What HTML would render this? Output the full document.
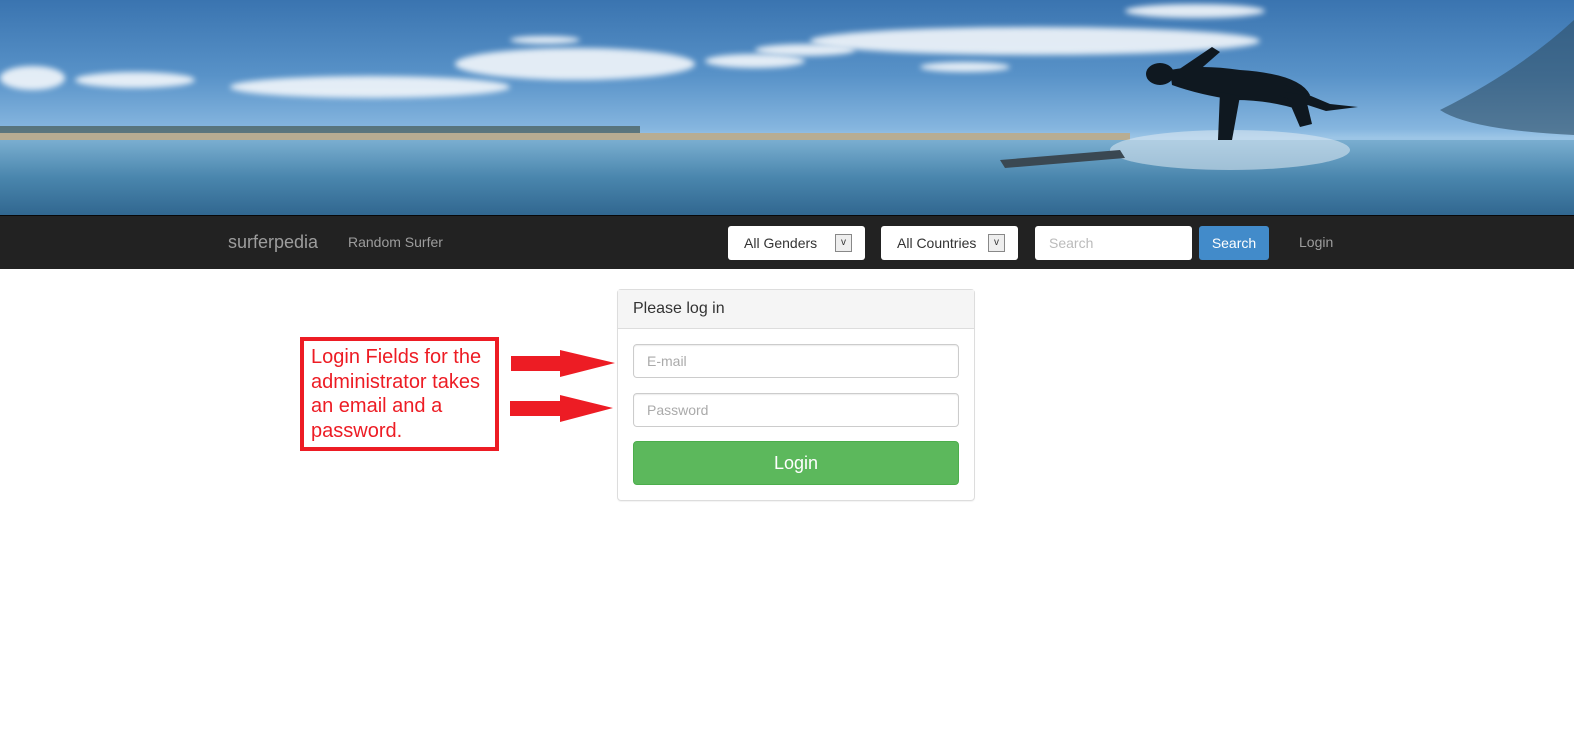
<!DOCTYPE html>
<html><head><style>
*{box-sizing:border-box}
body{margin:0;width:1574px;height:731px;background:#fff;font-family:"Liberation Sans",Arial,sans-serif;position:relative;overflow:hidden}
.banner{position:absolute;left:0;top:0;width:1574px;height:215px;background:linear-gradient(#3a74b0 0%,#5892c8 35%,#86b6df 60%,#9cc5e6 64%);overflow:hidden}
.sand{position:absolute;left:0;top:133px;width:1130px;height:8px;background:#b8ad92}
.land{position:absolute;left:0;top:126px;width:640px;height:8px;background:#3a4a3c;opacity:.6}
.sea{position:absolute;left:0;top:140px;width:1574px;height:75px;background:linear-gradient(#7aaed0,#4a86ad 50%,#316790)}
.cloud{position:absolute;background:#f3f7fb;border-radius:50%;filter:blur(3px);opacity:.9}
.nav{position:absolute;left:0;top:215px;width:1574px;height:54px;background:#222;border-top:1px solid #080808}
.brand{position:absolute;left:228px;top:232px;color:#9d9d9d;font-size:18px}
.link{position:absolute;color:#9d9d9d;font-size:14px}
.sel{position:absolute;top:226px;height:34px;background:#fff;border-radius:3px;font-size:14px;color:#333;padding:9px 0 0 16px}
.sel i{position:absolute;right:13px;top:8px;width:17px;height:18px;border:1px solid #888;background:#eee;font-style:normal;font-size:10px;text-align:center;line-height:16px}
.inp{position:absolute;border:1px solid #ccc;border-radius:4px;background:#fff;color:#aaa;font-size:14px;padding-left:13px;box-shadow:inset 0 1px 1px rgba(0,0,0,.075)}
</style></head><body>
<div class="banner">
<div class="land"></div><div class="sand"></div><div class="sea"></div>
<div class="cloud" style="left:0;top:66px;width:65px;height:24px"></div>
<div class="cloud" style="left:75px;top:72px;width:120px;height:16px"></div>
<div class="cloud" style="left:230px;top:76px;width:280px;height:22px"></div>
<div class="cloud" style="left:455px;top:48px;width:240px;height:32px"></div>
<div class="cloud" style="left:705px;top:54px;width:100px;height:14px"></div>
<div class="cloud" style="left:755px;top:44px;width:100px;height:12px"></div>
<div class="cloud" style="left:810px;top:27px;width:450px;height:28px"></div>
<div class="cloud" style="left:1125px;top:4px;width:140px;height:14px"></div>
<div class="cloud" style="left:920px;top:62px;width:90px;height:10px"></div>
<div class="cloud" style="left:510px;top:36px;width:70px;height:8px"></div>
<svg style="position:absolute;left:0;top:0" width="1574" height="215">
<ellipse cx="1230" cy="150" rx="120" ry="20" fill="#dfeaf2" opacity=".55"/>
<path d="M1000 160 L1120 150 L1125 158 L1005 168Z" fill="#3a4852"/>
<g fill="#0f1820">
<ellipse cx="1160" cy="74" rx="14" ry="11"/>
<path d="M1170 70 Q1200 64 1240 70 Q1300 74 1310 95 L1300 110 Q1270 100 1235 100 Q1200 95 1172 85Z"/>
<path d="M1175 72 L1212 47 L1220 52 L1188 80Z"/>
<path d="M1285 85 L1330 104 L1358 107 L1326 111 L1280 96Z"/>
<path d="M1220 92 L1240 96 L1232 140 L1218 140Z"/>
<path d="M1285 92 L1305 95 L1312 124 L1300 127Z"/>
</g>
<path d="M1574 20 Q1520 70 1440 110 Q1470 130 1574 135Z" fill="#2f4f66" opacity=".6"/>
</svg>
</div>
<div class="nav"></div>
<div class="brand">surferpedia</div>
<div class="link" style="left:348px;top:234px">Random Surfer</div>
<div class="sel" style="left:728px;width:137px">All Genders<i>v</i></div>
<div class="sel" style="left:881px;width:137px">All Countries<i>v</i></div>
<div class="sel" style="left:1035px;width:157px;color:#bbb;padding-left:14px">Search</div>
<div style="position:absolute;left:1199px;top:226px;width:70px;height:34px;background:#428bca;border-radius:3px;color:#fff;font-size:14px;text-align:center;line-height:34px">Search</div>
<div class="link" style="left:1299px;top:234px">Login</div>

<div style="position:absolute;left:617px;top:289px;width:358px;height:212px;border:1px solid #ddd;border-radius:4px;box-shadow:0 1px 1px rgba(0,0,0,.05)">
<div style="height:39px;background:#f5f5f5;border-bottom:1px solid #ddd;font-size:16px;color:#333;padding:10px 0 0 15px">Please log in</div>
</div>
<div class="inp" style="left:633px;top:344px;width:326px;height:34px;line-height:32px">E-mail</div>
<div class="inp" style="left:633px;top:393px;width:326px;height:34px;line-height:32px">Password</div>
<div style="position:absolute;left:633px;top:441px;width:326px;height:44px;background:#5cb85c;border:1px solid #4cae4c;border-radius:4px;color:#fff;font-size:18px;text-align:center;line-height:42px">Login</div>

<div style="position:absolute;left:300px;top:337px;width:199px;height:114px;border:4px solid #ed1c24;color:#ed1c24;font-size:20px;line-height:24.5px;padding:4px 0 0 7px;white-space:nowrap">Login Fields for the<br>administrator takes<br>an email and a<br>password.</div>
<svg style="position:absolute;left:505px;top:345px" width="115" height="85">
<path d="M6 11 L55 11 L55 5 L110 18 L55 32 L55 26 L6 26Z" fill="#ed1c24"/>
<path d="M5 56 L55 56 L55 50 L108 63 L55 77 L55 71 L5 71Z" fill="#ed1c24"/>
</svg>
</body></html>
